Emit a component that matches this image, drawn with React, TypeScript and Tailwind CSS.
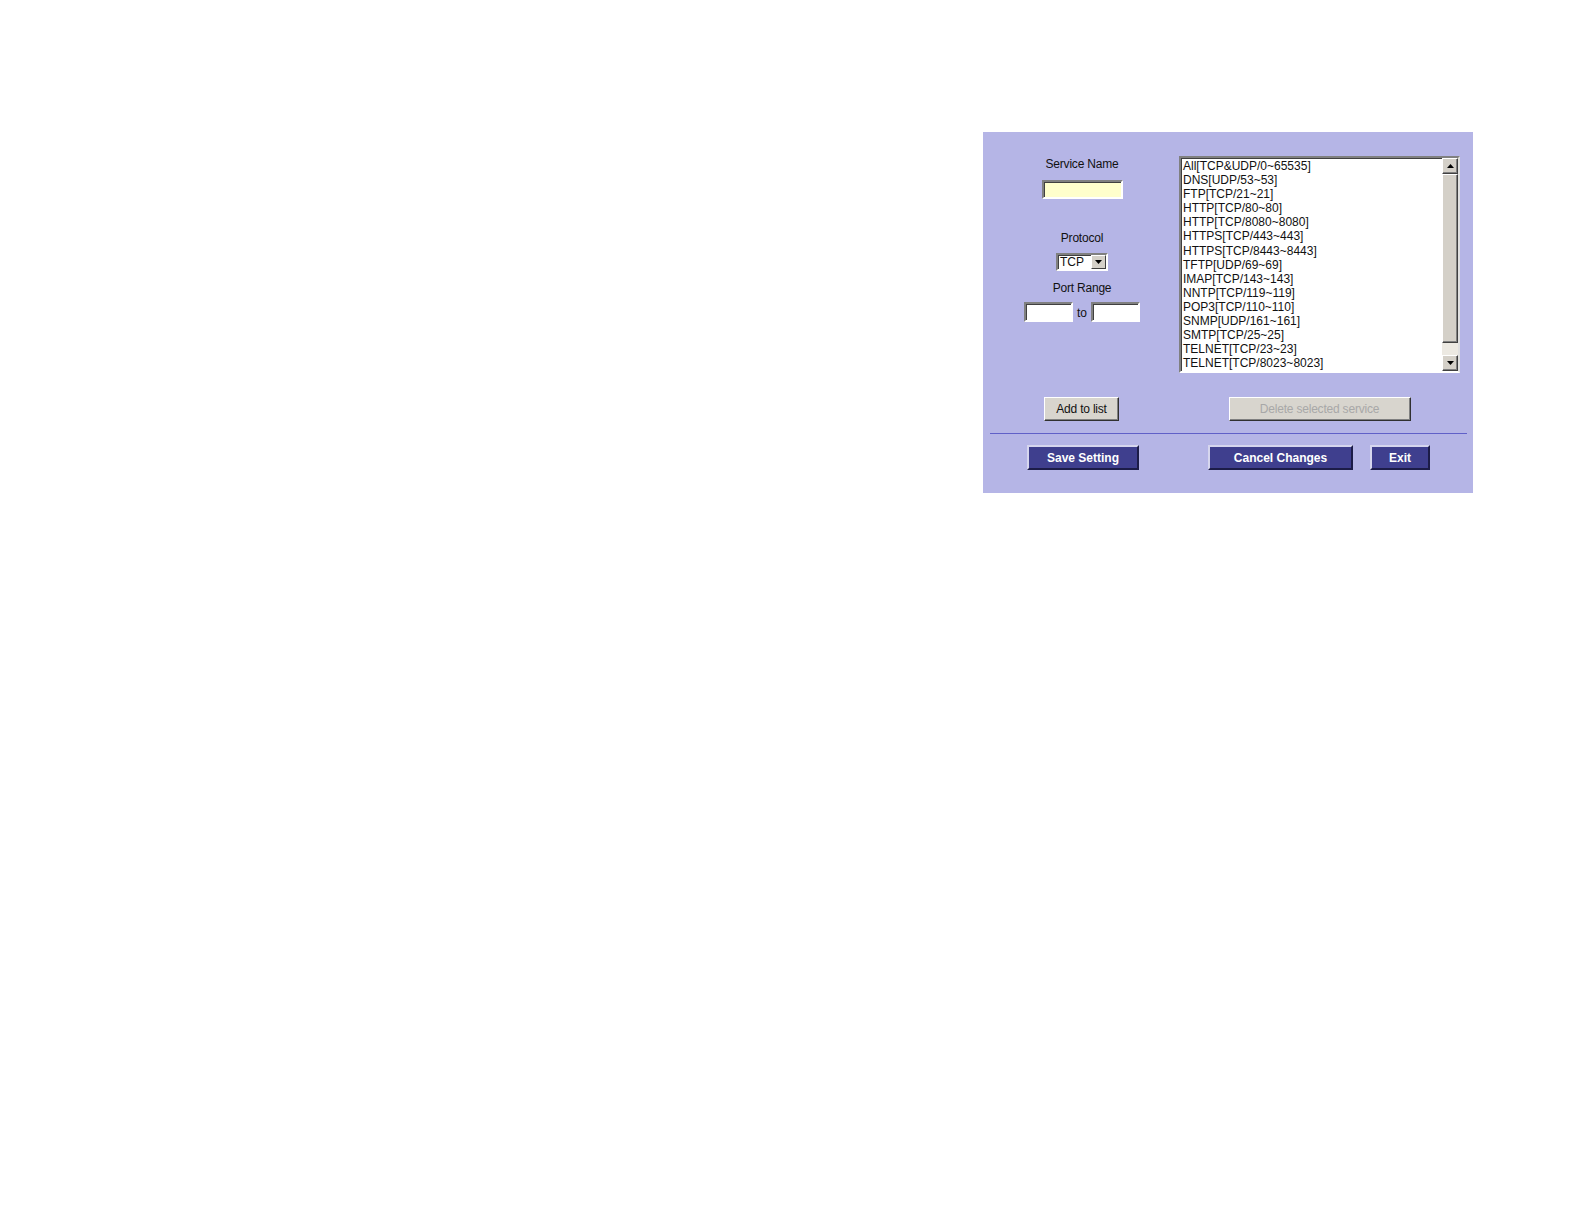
import React from "react";

const items = [
  "All[TCP&UDP/0~65535]",
  "DNS[UDP/53~53]",
  "FTP[TCP/21~21]",
  "HTTP[TCP/80~80]",
  "HTTP[TCP/8080~8080]",
  "HTTPS[TCP/443~443]",
  "HTTPS[TCP/8443~8443]",
  "TFTP[UDP/69~69]",
  "IMAP[TCP/143~143]",
  "NNTP[TCP/119~119]",
  "POP3[TCP/110~110]",
  "SNMP[UDP/161~161]",
  "SMTP[TCP/25~25]",
  "TELNET[TCP/23~23]",
  "TELNET[TCP/8023~8023]",
];

function Arrow({ up }: { up?: boolean }) {
  return (
    <svg width="7" height="4" viewBox="0 0 7 4">
      {up ? <polygon points="3.5,0 7,4 0,4" fill="#000" /> : <polygon points="0,0 7,0 3.5,4" fill="#000" />}
    </svg>
  );
}

function ScrollBtn({ up }: { up?: boolean }) {
  return (
    <div className="w-[16px] h-[16px] shrink-0 flex items-center justify-center bg-[#d4d0c8] border border-t-white border-l-white border-b-[#404040] border-r-[#404040] shadow-[inset_-1px_-1px_0_#808080]">
      <Arrow up={up} />
    </div>
  );
}

function Listbox() {
  return (
    <div className="w-[281px] h-[217px] flex border-2 border-t-[#808080] border-l-[#808080] border-b-white border-r-[#e0e0e0] shadow-[inset_1px_1px_0_#404040] bg-white">
      <div className="flex-1 overflow-hidden pt-[1px] pl-[2px]">
        {items.map((t) => (
          <div key={t} className="leading-[14.1px] text-[12px] whitespace-nowrap text-[#111]">
            {t}
          </div>
        ))}
      </div>
      <div className="w-[16px] flex flex-col bg-[#ece9e2]">
        <ScrollBtn up />
        <div className="h-[169px] bg-[#d4d0c8] border border-t-white border-l-white border-b-[#404040] border-r-[#404040] shadow-[inset_-1px_-1px_0_#808080]" />
        <div className="flex-1" />
        <ScrollBtn />
      </div>
    </div>
  );
}

function GrayButton({ children, disabled, w }: { children: React.ReactNode; disabled?: boolean; w: string }) {
  return (
    <div
      className={`${w} h-[24px] flex items-center justify-center bg-[#d8d5ce] border border-t-white border-l-white border-b-[#303030] border-r-[#303030] shadow-[inset_-1px_-1px_0_#808080] text-[12px] tracking-[-0.2px] ${
        disabled ? "text-[#a8a8a8]" : "text-[#111]"
      }`}
    >
      {children}
    </div>
  );
}

function NavyButton({ children, w }: { children: React.ReactNode; w: string }) {
  return (
    <div
      className={`${w} h-[25px] flex items-center justify-center bg-[#3f3f8e] border-2 border-t-[#d6d6ee] border-l-[#d6d6ee] border-b-[#1c1c48] border-r-[#1c1c48] text-white font-bold text-[12px]`}
    >
      {children}
    </div>
  );
}

const inset =
  "border-2 border-t-[#808080] border-l-[#808080] border-b-white border-r-white shadow-[inset_1px_1px_0_#404040]";

export default function App() {
  return (
    <div className="min-h-[1224px] bg-white pt-[132px] pl-[983px] font-['Liberation_Sans',Arial,sans-serif] text-[12px] text-[#111]">
      <div className="w-[490px] h-[361px] bg-[#b5b5e6] flex flex-col">
        <div className="flex">
          <div className="w-[196px] shrink-0 flex flex-col items-center pt-[25px] pl-[2px]">
            <div className="leading-[14px] tracking-[-0.2px]">Service Name</div>
            <div className={`mt-[9px] w-[81px] h-[19px] bg-[#ffffcc] ${inset}`} />
            <div className="mt-[32px] leading-[14px] tracking-[-0.2px]">Protocol</div>
            <div className={`mt-[8px] w-[52px] h-[18px] bg-white flex items-center ${inset}`}>
              <span className="flex-1 pl-[2px] leading-[14px] text-[12px]">TCP</span>
              <div className="w-[15px] h-[14px] flex items-center justify-center bg-[#d4d0c8] border border-t-white border-l-white border-b-[#404040] border-r-[#404040]">
                <Arrow />
              </div>
            </div>
            <div className="mt-[10px] leading-[14px] tracking-[-0.2px]">Port Range</div>
            <div className="mt-[7px] flex items-center">
              <div className={`w-[49px] h-[20px] bg-white ${inset}`} />
              <span className="w-[18px] text-center leading-[14px] pt-[2px]">to</span>
              <div className={`w-[49px] h-[20px] bg-white ${inset}`} />
            </div>
          </div>
          <div className="pt-[24px]">
            <Listbox />
          </div>
        </div>
        <div className="flex mt-[24px]">
          <div className="w-[196px] flex justify-center pl-[1px]">
            <GrayButton w="w-[75px]">Add to list</GrayButton>
          </div>
          <div className="w-[281px] flex justify-center">
            <GrayButton w="w-[182px]" disabled>
              Delete selected service
            </GrayButton>
          </div>
        </div>
        <div className="mt-[12px] ml-[7px] w-[477px] h-[1px] bg-[#6060c8]" />
        <div className="flex mt-[11px]">
          <div className="ml-[44px]">
            <NavyButton w="w-[112px]">Save Setting</NavyButton>
          </div>
          <div className="ml-[69px]">
            <NavyButton w="w-[145px]">Cancel Changes</NavyButton>
          </div>
          <div className="ml-[17px]">
            <NavyButton w="w-[60px]">Exit</NavyButton>
          </div>
        </div>
      </div>
    </div>
  );
}
